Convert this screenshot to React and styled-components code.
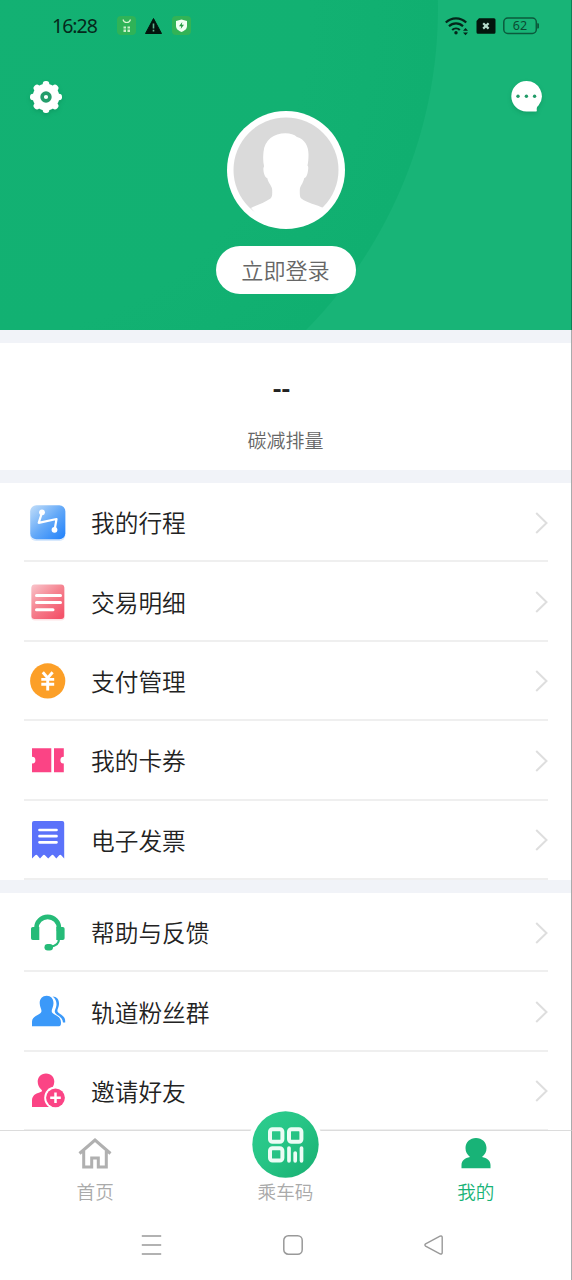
import React from "react";
import styled, { createGlobalStyle } from "styled-components";

const GlobalStyle = createGlobalStyle`
  * {
    box-sizing: border-box;
  }
  body {
    margin: 0;
    background: #fff;
    font-family: "Noto Sans", "Noto Sans CJK SC", sans-serif;
  }
  svg {
    display: block;
    flex: none;
    overflow: visible;
  }
`;

const Page = styled.div`
  width: 572px;
  height: 1280px;
  display: flex;
  flex-direction: column;
  overflow: hidden;
  background: linear-gradient(to left, #a9abac 1px, #f1f3f8 1px);
`;

const Header = styled.header`
  height: 330px;
  flex: none;
  display: flex;
  flex-direction: column;
  align-items: center;
  border-right: 1px solid #0c8255;
  background: radial-gradient(
    circle at -21px 8px,
    #13b173 0,
    #12b172 330px,
    #10af70 458.5px,
    #18b477 459.5px
  );
`;

const StatusBar = styled.div`
  width: 100%;
  height: 51px;
  padding: 0 31px 0 52px;
  display: flex;
  align-items: center;
  justify-content: space-between;
`;

const StatusGroup = styled.div`
  display: flex;
  align-items: center;
  gap: ${(props) => props.$gap}px;
`;

const Clock = styled.span`
  width: 55px;
  font-size: 19.5px;
  line-height: 24px;
  letter-spacing: -1px;
  color: #05291b;
`;

const Tools = styled.div`
  width: 100%;
  height: 32px;
  margin-top: 30px;
  padding: 0 29px 0 30px;
  display: flex;
  justify-content: space-between;
  svg {
    filter: drop-shadow(0 2px 2px rgba(0, 80, 45, 0.2));
  }
`;

const Avatar = styled.div`
  width: 118px;
  height: 118px;
  margin-top: -2px;
`;

const LoginButton = styled.button`
  width: 140px;
  height: 48px;
  margin-top: 17px;
  padding: 0 0 2px;
  border: 0;
  border-radius: 24px;
  background: #fff;
  color: #666;
  font-family: "Noto Sans CJK SC", sans-serif;
  font-size: 22.1px;
  font-weight: 350;
`;

const Panel = styled.section`
  flex: none;
  margin-top: 13px;
  background: #fff;
  border-right: 1px solid #a9abac;
`;

const Stat = styled(Panel)`
  height: 127px;
  display: flex;
  flex-direction: column;
  align-items: center;
`;

const StatValue = styled.div`
  height: 30px;
  margin: 30px 8px 0 0;
  font-size: 27px;
  line-height: 30px;
  font-weight: 600;
  color: #222;
`;

const StatLabel = styled.div`
  margin-top: 24px;
  font-family: "Noto Sans CJK SC", sans-serif;
  font-size: 19px;
  line-height: 26px;
  font-weight: 350;
  color: #666;
`;

const Row = styled.div`
  height: 79.4px;
  margin: 0 23px 0 24px;
  padding: 2px 0 0 6px;
  display: flex;
  align-items: center;
  border-bottom: 2px solid #efefef;
`;

const RowLabel = styled.span`
  flex: 1;
  margin: -1px 0 0 25px;
  font-family: "Noto Sans CJK SC", sans-serif;
  font-size: 23.7px;
  line-height: 36px;
  color: #222;
  font-weight: 350;
`;

const TabBar = styled.nav`
  flex: none;
  height: 81px;
  margin-top: -1px;
  display: grid;
  grid-template-columns: repeat(3, 1fr);
  grid-template-rows: 80px;
  background: #fff;
  border-top: 1px solid #dcdcdc;
  border-right: 1px solid #a9abac;
`;

const Tab = styled.div`
  display: flex;
  flex-direction: column;
  align-items: center;
  justify-content: flex-end;
  padding-bottom: 6px;
  font-family: "Noto Sans CJK SC", sans-serif;
  font-size: 18.6px;
  line-height: 28px;
  font-weight: 350;
  color: ${(props) => (props.$active ? "#18b377" : "#aaa")};
`;

const TabIcon = styled.div`
  height: 31px;
  margin-bottom: 8px;
`;

const RideCode = styled.div`
  width: 75px;
  height: 75px;
  padding: 4px;
  margin: 0 0 -4.5px;
  border-radius: 50%;
  background: #fff;
  flex: none;
`;

const SystemNav = styled.div`
  flex: 1;
  padding: 0 127px 2px 141px;
  display: flex;
  align-items: center;
  justify-content: space-between;
  background: #fff;
  border-right: 1px solid #a9abac;
`;

const StatusIcons = () => (
  <StatusGroup $gap={9.500}>
    <Clock>16:28</Clock>
    <svg width="19" height="19" viewBox="0 0 19 19">
      <rect width="19" height="19" rx="4" fill="#2fb357" />
      <path d="M6 3.500c1 4 6.500 4 7.500 0" fill="none" stroke="#d8f5d2" strokeWidth="1.100" />
      <path d="M6.500 10.500h2.500v2h-2.500zM10.500 10.500h2.500v2h-2.500zM6.500 13.500h2.500v2.500h-2.500zM10.500 13.500h2.500v2.500h-2.500z" fill="#c9f0c8" />
    </svg>
    <svg width="17" height="16" viewBox="0 0 17 16">
      <path d="M8.500 .5 16.500 15.500H.5z" fill="#03150d" stroke="#03150d" strokeLinejoin="round" />
      <path d="M8.500 5.500v5M8.500 11.700v1.800" stroke="#5cb68f" strokeWidth="1.600" />
    </svg>
    <svg width="19" height="19" viewBox="0 0 19 19">
      <rect width="19" height="19" rx="4" fill="#32b356" />
      <path d="M9.500 3.500 15 5v5c0 3-2.500 4.800-5.500 6C6.500 14.800 4 13 4 10V5z" fill="#f0fff2" />
      <path d="M10.300 6 7 10.300h2.200L8.700 13 12 8.800H9.800z" fill="#279b43" />
    </svg>
  </StatusGroup>
);

const SignalIcons = () => (
  <StatusGroup $gap={7}>
    <svg width="24" height="18" viewBox="0 0 24 18">
      <g fill="none" stroke="#04251a" strokeWidth="2.200">
        <path d="M.8 5.500a14.500 14.500 0 0 1 20.400 0" />
        <path d="M4 9.300a10 10 0 0 1 14 0" />
        <path d="M7.200 13a5.500 5.500 0 0 1 7.600 0" />
      </g>
      <circle cx="11" cy="15.800" r="1.700" fill="#04251a" />
      <path d="M18 13.800l2.500-2.800 2.500 2.800zM18 15.400l2.500 2.800 2.500-2.800z" fill="#04251a" />
    </svg>
    <svg width="20" height="16" viewBox="0 0 20 16">
      <path d="M3 .3H18a1.500 1.500 0 0 1 1.500 1.500v12.400a1.500 1.500 0 0 1-1.500 1.500H2a1.500 1.500 0 0 1-1.500-1.500V3z" fill="#03150d" />
      <path d="M7.200 5.200l5.400 5.400M12.600 5.200l-5.400 5.400" stroke="#b5dccb" strokeWidth="2.200" />
    </svg>
    <svg width="37" height="18" viewBox="0 0 37 18">
      <rect x=".8" y="1" width="32.500" height="15.500" rx="4" fill="none" stroke="#0b5a3c" strokeWidth="1.500" />
      <path d="M34.200 6.200h.8a1 1 0 0 1 1 1v3.400a1 1 0 0 1-1 1h-.8z" fill="#0b5a3c" />
      <text x="17" y="13.300" textAnchor="middle" fontSize="12.500" fontFamily="Noto Sans" fill="#0b4a32">62</text>
    </svg>
  </StatusGroup>
);

const GearIcon = () => (
  <svg width="32" height="32" viewBox="0 0 32 32">
    <g fill="#fff">
      <circle cx="16" cy="16" r="13.300" />
      {[0, 45, 90, 135, 180, 225, 270, 315].map((angle) => (
        <rect key={angle} x="12.700" y="0" width="6.600" height="8" rx="3" transform={`rotate(${angle} 16 16)`} />
      ))}
    </g>
    <circle cx="16" cy="16" r="3.900" fill="#fff" stroke="#249d6b" strokeWidth="3.600" />
  </svg>
);

const ChatIcon = () => (
  <svg width="31" height="31" viewBox="0 0 31 31">
    <path d="M15.500 0a15.200 15.200 0 0 1 12 24.600c-1.500 1.400-2 2.400-1.700 4.600.1 1-.3 1.300-1.300 1.200H15.500a15.200 15.200 0 0 1 0-30.400z" fill="#fff" />
    <g fill="#219b68">
      <circle cx="7" cy="15.200" r="1.700" />
      <circle cx="15.400" cy="15.200" r="1.700" />
      <circle cx="23.600" cy="15.200" r="1.700" />
    </g>
  </svg>
);

const Portrait = () => (
  <svg width="118" height="118" viewBox="0 0 118 118">
    <circle cx="59" cy="59" r="59" fill="#fff" />
    <circle cx="59" cy="59" r="52.500" fill="#dadada" />
    <path
      d="M24 97c6-3 14-5.500 19.500-9.500 2-1.500 1.700-4.500 1.700-8.500 0-4-3.700-6.500-5-12-2.200-.5-3.600-4.500-3.800-8.500-.1-2 .6-2.500.6-3.500-1-4-1-9-.5-14C37.500 29 47 22.300 58.500 22.300c5 0 8.500 1.200 11.500 3.700 8 2.500 11.500 9 11.500 17.500 0 4-.3 8-1 11 1.100 1 .8 3 .5 5-.5 4-1.500 7-3.700 7.500-1.300 6-4.500 8-4.500 12s-.2 7 1.500 8.500c5 4 16 6.500 22.200 9.500L80 113H38z"
      fill="#fff"
    />
  </svg>
);

const TripIcon = () => (
  <svg width="36" height="36" viewBox="0 0 36 36">
    <defs>
      <linearGradient id="trip" x1="0" y1="0" x2="1" y2="1">
        <stop offset="0" stopColor="#c2def9" />
        <stop offset=".5" stopColor="#64a9f8" />
        <stop offset="1" stopColor="#1f80fb" />
      </linearGradient>
    </defs>
    <rect x="0" y="1.500" width="35.500" height="34.500" rx="6" fill="#d8e9fd" />
    <rect x=".3" y=".3" width="35" height="34" rx="6" fill="url(#trip)" />
    <path d="M12 7.500 8.700 17.800 26.500 14 24.700 24.500" fill="none" stroke="#fff" strokeWidth="2.200" strokeLinejoin="round" />
    <circle cx="12" cy="7.300" r="2.900" fill="#fff" />
    <circle cx="24.500" cy="24.800" r="2.900" fill="#fff" />
  </svg>
);

const BillIcon = () => (
  <svg width="36" height="36" viewBox="0 0 36 36">
    <defs>
      <linearGradient id="bill" x1="0" y1="0" x2=".8" y2="1">
        <stop offset="0" stopColor="#f9c5cb" />
        <stop offset=".5" stopColor="#f58390" />
        <stop offset="1" stopColor="#f4536a" />
      </linearGradient>
    </defs>
    <rect x="1" y="1.500" width="34" height="35" rx="4" fill="#fde3e6" />
    <rect x="1.500" y=".5" width="32.700" height="34.500" rx="3" fill="url(#bill)" />
    <path d="M6.500 11.400H30.500M6.500 18.600H30.500M6.500 25.700H23" stroke="#fff" strokeWidth="3" strokeLinecap="round" />
  </svg>
);

const PayIcon = () => (
  <svg width="36" height="36" viewBox="0 0 36 36">
    <circle cx="17.700" cy="17.900" r="17.600" fill="#fc9f27" />
    <path d="M12.800 9.300 17.700 15 22.600 9.300M11.300 16.400H24.200M11.300 21.200H24.200M17.700 15V27.500" fill="none" stroke="#fff" strokeWidth="2.900" />
  </svg>
);

const TicketIcon = () => (
  <svg width="36" height="36" viewBox="0 0 36 36">
    <path d="M2 5.200H21.300V29.200H2V20.600a3.400 3.400 0 0 0 0-6.800zM24 5.200H33.800V13.800a3.400 3.400 0 0 0 0 6.800V29.200H24z" fill="#fb4485" />
  </svg>
);

const InvoiceIcon = () => (
  <svg width="36" height="36" viewBox="0 0 36 36">
    <path
      d="M4-1H32.200a2 2 0 0 1 2 2V36.500L31.500 33.500Q30.200 32 29 33.500L26.300 36.500 23.700 33.500Q22.500 32 21.300 33.500L18.200 36.500 15.200 33.500Q14 32 12.800 33.500L10 36.500 7.500 33.500Q6.200 32 5 33.500L2 36.500V1a2 2 0 0 1 2-2z"
      fill="#5b72fa"
    />
    <path d="M9.500 8H26.500M9.500 14.200H26.500M9.500 20.300H26.500" stroke="#fff" strokeWidth="2.700" strokeLinecap="round" />
  </svg>
);

const HelpIcon = () => (
  <svg width="36" height="36" viewBox="0 0 36 36">
    <g fill="none" stroke="#26bb78">
      <path d="M6.400 16V13.200a11.200 11.200 0 0 1 22.600 0V16" strokeWidth="4.600" />
      <path d="M29 24c0 4-3 7-9 7.800" strokeWidth="2.200" />
    </g>
    <path d="M2.800 12H9.300V25H2.800a1.800 1.800 0 0 1-1.800-1.800V13.800A1.800 1.800 0 0 1 2.800 12zM26.300 12h6.500a1.800 1.800 0 0 1 1.800 1.800v9.400a1.800 1.800 0 0 1-1.800 1.800h-6.500z" fill="#26bb78" />
    <rect x="14.500" y="29" width="8.500" height="6.400" rx="3.200" fill="#26bb78" />
  </svg>
);

const FansIcon = () => (
  <svg width="36" height="36" viewBox="0 0 36 36">
    <g fill="#3b99f9">
      <path d="M22.500 2.500c5 0 7 4 6.400 8.500-.3 2.500-1.500 4.300-1.500 5.700 0 3.300 7.800 4 7.800 10.300v1.400h-2.200c-.6-6.500-7.600-7-8.200-10.700-.2-1.600 1.100-3.200 1.600-6.200.4-3.400-.6-6.900-3.900-9z" />
      <path d="M16.700 1.800c4.400 0 6.900 3.300 6.800 7.400-.1 3.600-1.800 5.800-1.800 7.800 0 4.500 9.300 3.500 9.300 11.500 0 2.600-.4 3.800-2 3.800H2v-4.500c0-6.500 9.500-6.800 9.500-10.800 0-2-1.700-4.200-1.800-7.800-.1-4.100 2.600-7.400 7-7.400z" />
    </g>
  </svg>
);

const InviteIcon = () => (
  <svg width="36" height="36" viewBox="0 0 36 36">
    <path d="M16 .5c5.300 0 8.400 3.900 8.300 8.300-.1 4.200-2.300 6.300-3.600 8.200v17H2v-6.500c0-4.700 3.500-7 7.500-8 2.800-.8 3.300-1.500 1.500-3.200C9 14.500 7.800 12 7.700 8.800 7.600 4.400 10.700.5 16 .5z" fill="#fb4485" />
    <circle cx="25.500" cy="24.800" r="11.300" fill="#fff" />
    <circle cx="25.500" cy="24.800" r="9.400" fill="#fb4485" />
    <path d="M20.200 24.800h10.600M25.500 19.500v10.600" stroke="#fff" strokeWidth="2.500" />
  </svg>
);

const Chevron = () => (
  <svg width="13" height="22" viewBox="0 0 13 22">
    <path d="M1.200 1 11.500 11 1.200 21" fill="none" stroke="#dedede" strokeWidth="2" />
  </svg>
);

const HomeIcon = () => (
  <svg width="34" height="31" viewBox="0 0 34 31">
    <path d="M1.500 15.500 17 2 32.500 15.500M5.700 13V29H13.700V20H20.300V29H28.300V13" fill="none" stroke="#b0b0b0" strokeWidth="3" />
  </svg>
);

const MeIcon = () => (
  <svg width="30" height="31" viewBox="0 0 30 31">
    <path d="M15 0c6 0 10.500 4.300 10.500 10 0 4-1.500 6.500-4.500 9 5 1 8.500 3.500 8.500 8v3.300H.5V27c0-4.500 3.500-7 8.500-8-3-2.500-4.500-5-4.500-9C4.500 4.300 9 0 15 0z" fill="#18b377" />
  </svg>
);

const QrIcon = () => (
  <svg width="67" height="67" viewBox="0 0 67 67">
    <defs>
      <linearGradient id="ride" x1="0" y1="0" x2="1" y2="1">
        <stop offset="0" stopColor="#2dcd8f" />
        <stop offset=".45" stopColor="#27c586" />
        <stop offset="1" stopColor="#17ae70" />
      </linearGradient>
    </defs>
    <circle cx="33.500" cy="33.500" r="33.200" fill="url(#ride)" />
    <g fill="none" stroke="#ecfcf5" strokeWidth="4">
      <rect x="18" y="18.300" width="12.400" height="12.400" rx="2.500" />
      <rect x="37" y="18.300" width="12.400" height="12.400" rx="2.500" />
      <rect x="18" y="37.200" width="12.400" height="12.400" rx="2.500" />
      <path d="M37 37v12.800M43.200 42v7.800M49.500 37v12.800" strokeWidth="3.700" strokeLinecap="round" />
    </g>
  </svg>
);

const tripRows = [
  { label: "我的行程", Icon: TripIcon },
  { label: "交易明细", Icon: BillIcon },
  { label: "支付管理", Icon: PayIcon },
  { label: "我的卡券", Icon: TicketIcon },
  { label: "电子发票", Icon: InvoiceIcon },
];

const serviceRows = [
  { label: "帮助与反馈", Icon: HelpIcon },
  { label: "轨道粉丝群", Icon: FansIcon },
  { label: "邀请好友", Icon: InviteIcon },
];

const Menu = ({ rows }) => (
  <Panel>
    {rows.map(({ label, Icon }) => (
      <Row key={label}>
        <Icon />
        <RowLabel>{label}</RowLabel>
        <Chevron />
      </Row>
    ))}
  </Panel>
);

const App = () => {
  return (
    <>
      <GlobalStyle />
      <Page>
        <Header>
          <StatusBar>
            <StatusIcons />
            <SignalIcons />
          </StatusBar>
          <Tools>
            <GearIcon />
            <ChatIcon />
          </Tools>
          <Avatar>
            <Portrait />
          </Avatar>
          <LoginButton>立即登录</LoginButton>
        </Header>
        <Stat>
          <StatValue>--</StatValue>
          <StatLabel>碳减排量</StatLabel>
        </Stat>
        <Menu rows={tripRows} />
        <Menu rows={serviceRows} />
        <TabBar>
          <Tab>
            <TabIcon>
              <HomeIcon />
            </TabIcon>
            首页
          </Tab>
          <Tab>
            <RideCode>
              <QrIcon />
            </RideCode>
            乘车码
          </Tab>
          <Tab $active>
            <TabIcon>
              <MeIcon />
            </TabIcon>
            我的
          </Tab>
        </TabBar>
        <SystemNav>
          <svg width="21" height="20" viewBox="0 0 21 20">
            <path d="M.8 1H20.200M.8 10H20.200M.8 19H20.200" stroke="#999" strokeWidth="1.500" />
          </svg>
          <svg width="20" height="20" viewBox="0 0 20 20">
            <rect x=".8" y=".8" width="18.400" height="18.400" rx="4.500" fill="none" stroke="#999" strokeWidth="1.500" />
          </svg>
          <svg width="20" height="20" viewBox="0 0 20 20">
            <path d="M1.600 8.900 16 1.200Q18.200.4 18.200 2.500V17.500Q18.200 19.600 16 18.800L1.600 11.100Q.2 10 1.600 8.900z" fill="none" stroke="#999" strokeWidth="1.400" />
          </svg>
        </SystemNav>
      </Page>
    </>
  );
};

export default App;
